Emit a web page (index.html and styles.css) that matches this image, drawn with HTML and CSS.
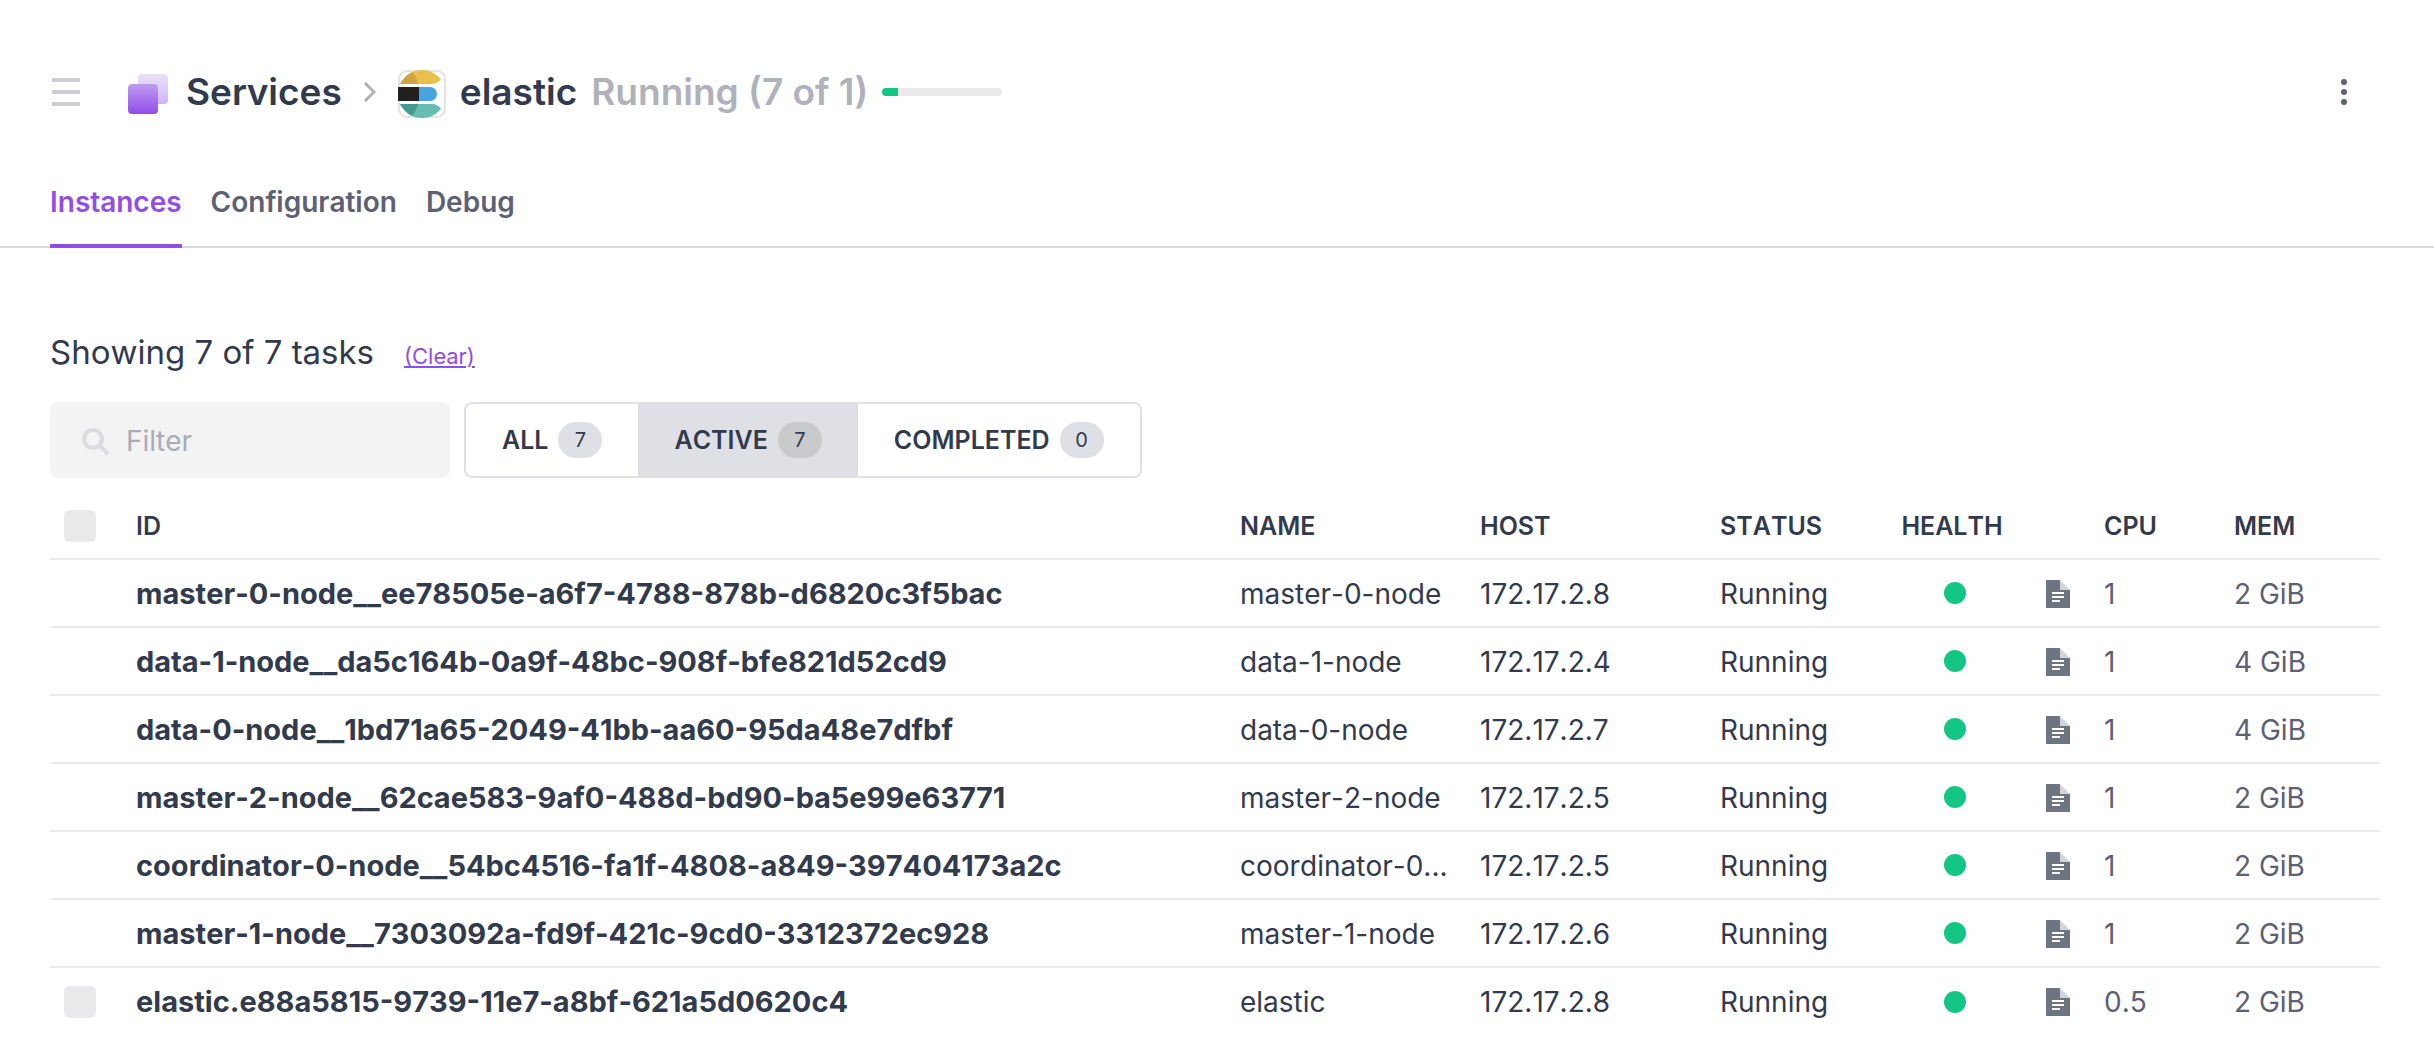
FILE: index.html
```html
<!DOCTYPE html>
<html lang="en">
<head>
<meta charset="utf-8">
<title>elastic - Services</title>
<link rel="stylesheet" href="styles.css">
</head>
<body>
<svg class="sprite" aria-hidden="true">
  <symbol id="doc" viewBox="0 0 24 28">
    <path fill="#6f7482" d="M0 0h14v10h10v18H0z"/>
    <path fill="#d3d5d9" d="M14 0l10 10H14z"/>
    <path fill="#fff" d="M6 12h12v2H6zM6 16h12v2H6zM6 20h8v2H6z"/>
  </symbol>
</svg>
<header class="page-header">
  <div class="title-bar">
    <button class="icon-button menu" aria-label="Toggle menu">
      <svg width="28" height="28" viewBox="0 0 28 28"><path fill="#cdced5" d="M0 0h28v4H0zM0 12h28v4H0zM0 24h28v4H0z"/></svg>
    </button>
    <nav class="breadcrumb" aria-label="Breadcrumb">
      <a class="crumb" href="#services">
        <svg width="40" height="40" viewBox="0 0 40 40">
          <defs>
            <linearGradient id="back" x1="0" y1="0" x2="0" y2="1"><stop offset="0" stop-color="#eae0fb"/><stop offset="1" stop-color="#cfb6f4"/></linearGradient>
            <linearGradient id="front" x1="0" y1="0" x2="0" y2="1"><stop offset="0" stop-color="#bf9bf1"/><stop offset="1" stop-color="#924de6"/></linearGradient>
          </defs>
          <rect x="10" width="30" height="30" rx="4" fill="url(#back)"/>
          <rect y="10" width="30" height="30" rx="4" fill="url(#front)"/>
        </svg>
        <span>Services</span>
      </a>
      <svg class="chevron" width="12" height="20" viewBox="0 0 12 20"><path d="M1 1l9 9-9 9" fill="none" stroke="#afb1bb" stroke-width="3"/></svg>
      <a class="crumb service" href="#elastic">
        <svg width="48" height="48" viewBox="0 0 48 48">
          <defs><clipPath id="disc"><path d="M24 0C34 0 40 6 43 9.500Q38 14 34 14H2Q10 0 24 0zM2 34H34Q39 34 43 38.500C39 44 33 48 24 48Q10 48 2 34z"/></clipPath></defs>
          <rect x="1" y="1" width="46" height="46" rx="8" fill="#fff" stroke="#e4e4e6" stroke-width="2"/>
          <g clip-path="url(#disc)">
            <path fill="#e9c04a" d="M0 0h48v14H0z"/>
            <path fill="#66bcb0" d="M0 34h48v14H0z"/>
            <path fill="#d1a545" d="M0 0h12Q19 6 20 14H0z"/>
            <path fill="#459b91" d="M0 34h20Q18 42 12 48H0z"/>
          </g>
          <path fill="#4aa4dc" d="M21 17h11a7 7 0 0 1 0 14H21z"/>
          <path fill="#231f20" d="M0 17h21v14H0z"/>
        </svg>
        <span>elastic</span>
      </a>
      <span class="state">Running (7 of 1)</span>
      <progress class="health-bar" value="16" max="120" aria-label="Health"></progress>
    </nav>
    <button class="icon-button more" aria-label="More actions">
      <svg width="6" height="26" viewBox="0 0 6 26" fill="#5d6173"><circle cx="3" cy="3" r="3"/><circle cx="3" cy="13" r="3"/><circle cx="3" cy="23" r="3"/></svg>
    </button>
  </div>
  <nav class="tabs" aria-label="Sections">
    <a class="tab active" href="#instances" aria-current="page">Instances</a>
    <a class="tab" href="#configuration">Configuration</a>
    <a class="tab" href="#debug">Debug</a>
  </nav>
</header>
<main class="content">
  <div class="summary">
    <h1>Showing 7 of 7 tasks</h1>
    <a href="#clear">(Clear)</a>
  </div>
  <div class="filters">
    <label class="search">
      <svg width="28" height="28" viewBox="0 0 28 28" fill="none" stroke="#dbdce0"><circle cx="11" cy="12" r="9" stroke-width="4"/><path d="M17 18l9 9" stroke-width="4"/></svg>
      <input type="text" placeholder="Filter" aria-label="Filter">
    </label>
    <div class="segments" role="group" aria-label="Task state">
      <button>ALL <span class="badge">7</span></button>
      <button class="active" aria-pressed="true">ACTIVE <span class="badge">7</span></button>
      <button>COMPLETED <span class="badge">0</span></button>
    </div>
  </div>
  <table class="tasks">
    <colgroup>
      <col class="col-check"><col><col class="col-wide"><col class="col-wide"><col class="col-status"><col class="col-health"><col class="col-logs"><col class="col-cpu"><col class="col-mem">
    </colgroup>
    <thead>
      <tr><th class="check"><input type="checkbox" aria-label="Select all tasks"></th><th>ID</th><th>NAME</th><th>HOST</th><th>STATUS</th><th class="health">HEALTH</th><th></th><th>CPU</th><th>MEM</th></tr>
    </thead>
    <tbody>
      <tr><td></td><td class="id">master-0-node__ee78505e-a6f7-4788-878b-d6820c3f5bac</td><td>master-0-node</td><td>172.17.2.8</td><td>Running</td><td class="health"><span class="dot"></span></td><td><svg class="doc"><use href="#doc"/></svg></td><td class="muted">1</td><td class="muted">2 GiB</td></tr>
      <tr><td></td><td class="id">data-1-node__da5c164b-0a9f-48bc-908f-bfe821d52cd9</td><td>data-1-node</td><td>172.17.2.4</td><td>Running</td><td class="health"><span class="dot"></span></td><td><svg class="doc"><use href="#doc"/></svg></td><td class="muted">1</td><td class="muted">4 GiB</td></tr>
      <tr><td></td><td class="id">data-0-node__1bd71a65-2049-41bb-aa60-95da48e7dfbf</td><td>data-0-node</td><td>172.17.2.7</td><td>Running</td><td class="health"><span class="dot"></span></td><td><svg class="doc"><use href="#doc"/></svg></td><td class="muted">1</td><td class="muted">4 GiB</td></tr>
      <tr><td></td><td class="id">master-2-node__62cae583-9af0-488d-bd90-ba5e99e63771</td><td>master-2-node</td><td>172.17.2.5</td><td>Running</td><td class="health"><span class="dot"></span></td><td><svg class="doc"><use href="#doc"/></svg></td><td class="muted">1</td><td class="muted">2 GiB</td></tr>
      <tr><td></td><td class="id">coordinator-0-node__54bc4516-fa1f-4808-a849-397404173a2c</td><td>coordinator-0...</td><td>172.17.2.5</td><td>Running</td><td class="health"><span class="dot"></span></td><td><svg class="doc"><use href="#doc"/></svg></td><td class="muted">1</td><td class="muted">2 GiB</td></tr>
      <tr><td></td><td class="id">master-1-node__7303092a-fd9f-421c-9cd0-3312372ec928</td><td>master-1-node</td><td>172.17.2.6</td><td>Running</td><td class="health"><span class="dot"></span></td><td><svg class="doc"><use href="#doc"/></svg></td><td class="muted">1</td><td class="muted">2 GiB</td></tr>
      <tr><td class="check"><input type="checkbox" aria-label="Select elastic"></td><td class="id">elastic.e88a5815-9739-11e7-a8bf-621a5d0620c4</td><td>elastic</td><td>172.17.2.8</td><td>Running</td><td class="health"><span class="dot"></span></td><td><svg class="doc"><use href="#doc"/></svg></td><td class="muted">0.5</td><td class="muted">2 GiB</td></tr>
    </tbody>
  </table>
</main>
</body>
</html>
```
FILE: styles.css
```css
* { box-sizing: border-box; }
body {
  margin: 0;
  background: #fff;
  color: #323a4d;
  font-family: Inter, "Liberation Sans", sans-serif;
  font-size: 28px;
  line-height: 40px;
  font-kerning: none;
}
button, input { font: inherit; font-kerning: none; color: inherit; }
svg { display: block; flex: none; }
.sprite { position: absolute; width: 0; height: 0; }

.page-header { border-bottom: 2px solid #d8d9de; }
.title-bar {
  display: flex;
  align-items: center;
  padding: 60px 87px 0 52px;
  height: 124px;
}
.icon-button { padding: 0; border: 0; background: none; }
.more { margin-left: auto; }
.breadcrumb {
  display: flex;
  align-items: center;
  margin-left: 48px;
  font-size: 37px;
  line-height: 48px;
  font-weight: 600;
  white-space: nowrap;
}
.crumb {
  display: flex;
  align-items: center;
  gap: 18px;
  color: inherit;
  text-decoration: none;
}
.crumb svg { margin-top: 4px; }
.chevron { margin: 0 22px; }
.crumb.service { gap: 14px; }
.state { margin-left: 14px; color: #afb1bb; }
.health-bar {
  appearance: none;
  width: 120px;
  height: 8px;
  margin-left: 14px;
  border: 0;
  border-radius: 4px;
  overflow: hidden;
}
.health-bar::-webkit-progress-bar { background: #eaeaeb; }
.health-bar::-webkit-progress-value { background: #14c684; }

.tabs {
  display: flex;
  gap: 29px;
  padding: 58px 50px 0;
  margin-bottom: -2px;
  font-weight: 600;
}
.tab {
  height: 66px;
  border-bottom: 4px solid transparent;
  color: #5d6173;
  text-decoration: none;
}
.tab.active { border-color: #924de6; color: #924de6; }

.content { padding: 80px 54px 20px 50px; }
.summary { display: flex; align-items: baseline; gap: 30px; margin-bottom: 26px; }
.summary h1 { margin: 0; font-size: 33px; line-height: 48px; font-weight: 400; }
.summary a { font-size: 22px; line-height: 32px; color: #924de6; }

.filters { display: flex; gap: 14px; }
.search {
  display: flex;
  align-items: center;
  gap: 16px;
  width: 400px;
  height: 76px;
  padding: 2px 32px 0;
  border-radius: 8px;
  background: #f3f3f3;
}
.search input {
  flex: 1;
  min-width: 0;
  padding: 0;
  border: 0;
  outline: 0;
  background: none;
}
.search input::placeholder { color: #a9acb6; opacity: 1; }
.segments {
  display: flex;
  border: 2px solid #dfe0e5;
  border-radius: 8px;
  overflow: hidden;
}
.segments button {
  display: flex;
  align-items: center;
  gap: 10px;
  padding: 0 36px;
  border: 0;
  background: #fff;
  font-size: 25px;
  font-weight: 600;
}
.segments .active { background: #dfe0e5; }
.badge {
  min-width: 44px;
  height: 36px;
  padding: 0 14px;
  border-radius: 18px;
  background: #dfe0e5;
  font-size: 20px;
  line-height: 36px;
  font-weight: 400;
  text-align: center;
}
.active .badge { background: #c9cacc; }

.tasks { width: 100%; table-layout: fixed; border-collapse: collapse; }
.col-check { width: 86px; }
.col-wide { width: 240px; }
.col-status { width: 160px; }
.col-health { width: 150px; }
.col-logs { width: 74px; }
.col-cpu { width: 130px; }
.col-mem { width: 146px; }
.tasks th, .tasks td {
  height: 68px;
  padding: 1px 20px 0 0;
  overflow: hidden;
  text-align: left;
  text-overflow: ellipsis;
  white-space: nowrap;
}
.tasks th { height: 81px; font-size: 25px; font-weight: 600; padding-top: 15px; }
.tasks th.check { padding: 15px 0 0 14px; }
.tasks td.check { padding: 0 0 0 14px; }
.tasks tr { border-bottom: 2px solid #eaeaeb; }
.tasks tbody tr:last-child { border-bottom: 0; }
.tasks .health { padding: 0; text-align: center; }
.tasks th.health { padding: 15px 6px 0 0; }
.tasks .id { font-size: 29px; font-weight: 700; }
.muted { color: #5d6173; }
.check input {
  appearance: none;
  display: block;
  width: 32px;
  height: 32px;
  margin: 0;
  border-radius: 6px;
  background: #eaeaec;
}
.dot {
  display: block;
  width: 22px;
  height: 22px;
  margin: 0 auto;
  border-radius: 11px;
  background: #14c684;
}
.doc { width: 24px; height: 28px; margin-left: 16px; }
```
